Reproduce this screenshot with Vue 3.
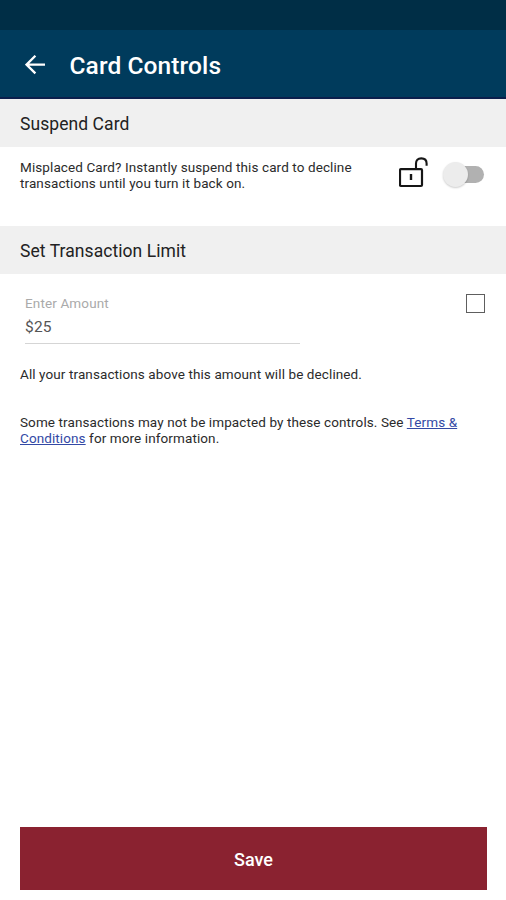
<script setup>
import { ref } from 'vue'

const suspended = ref(false)
const limitEnabled = ref(false)
const amount = ref('$25')
</script>

<template>
  <div class="screen">
    <div class="status-bar"></div>
    <header class="app-bar">
      <button class="back" aria-label="Back">
        <svg width="20" height="20" viewBox="0 0 20 20" fill="none" stroke="#fff" stroke-width="2.3">
          <path d="M20 9.6H2M10.4 0.8L1.5 9.6l8.9 8.8" />
        </svg>
      </button>
      <h1>Card Controls</h1>
    </header>

    <h2 class="section-title">Suspend Card</h2>
    <section class="suspend">
      <p class="copy">Misplaced Card? Instantly suspend this card to decline<br />transactions until you turn it back on.</p>
      <svg class="lock" width="30" height="31" viewBox="0 0 30 31" fill="none" stroke="#161616">
        <rect x="1" y="12.2" width="22" height="16.8" rx="1" stroke-width="2.2" />
        <path d="M17 12V6.5Q17 1.4 22.3 1.4T27.6 6.5V8.8" stroke-width="2.1" />
        <path d="M12 17v6" stroke-width="2.4" />
      </svg>
      <button class="switch" :class="{ on: suspended }" role="switch" :aria-checked="suspended" @click="suspended = !suspended">
        <span class="track"></span>
        <span class="thumb"></span>
      </button>
    </section>

    <h2 class="section-title">Set Transaction Limit</h2>
    <section class="limit">
      <label class="field">
        <span class="label">Enter Amount</span>
        <input v-model="amount" type="text" />
      </label>
      <button class="checkbox" :class="{ checked: limitEnabled }" role="checkbox" :aria-checked="limitEnabled" @click="limitEnabled = !limitEnabled"></button>
    </section>
    <p class="copy note">All your transactions above this amount will be declined.</p>
    <p class="copy terms">Some transactions may not be impacted by these controls. See <a href="#">Terms &amp;<br />Conditions</a> for more information.</p>

    <button class="save">Save</button>
  </div>
</template>

<style>
body {
  margin: 0;
  background: #fff;
}
</style>

<style scoped>
.screen {
  box-sizing: border-box;
  display: flex;
  flex-direction: column;
  height: 900px;
  padding-bottom: 10px;
  background: #fff;
  color: #222;
  font-family: Roboto, "Liberation Sans", sans-serif;
}
button {
  padding: 0;
  border: 0;
  background: none;
  font-family: inherit;
}
h1, h2, p {
  margin: 0;
}
.status-bar {
  height: 30px;
  flex: none;
  background: #002e46;
}
.app-bar {
  box-sizing: border-box;
  display: flex;
  align-items: center;
  gap: 24.5px;
  height: 69px;
  flex: none;
  padding: 2px 25px 0;
  background: #003b5c;
  border-bottom: 2px solid #0b1f4c;
}
.back {
  display: flex;
}
h1 {
  padding-top: 2px;
  color: #fff;
  font-size: 24.5px;
  font-weight: 500;
  line-height: 30px;
  letter-spacing: 0.1px;
}
.section-title {
  height: 48px;
  flex: none;
  padding-left: 20px;
  background: #f0f0f0;
  color: #222;
  font-size: 17.5px;
  font-weight: 400;
  line-height: 50px;
  letter-spacing: 0.07px;
}
.suspend {
  box-sizing: border-box;
  display: flex;
  align-items: flex-start;
  height: 79px;
  flex: none;
  padding: 9px 21px 0 20px;
}
.copy {
  color: #2b2b2b;
  font-size: 13.5px;
  line-height: 16px;
  letter-spacing: 0.1px;
  white-space: nowrap;
}
.suspend .copy {
  flex: 1;
  padding-top: 3px;
}
.lock {
  flex: none;
  margin: 1px 14px 0 0;
}
.switch {
  display: grid;
  align-items: center;
  width: 42px;
  height: 36px;
  flex: none;
}
.track, .thumb {
  grid-area: 1 / 1;
}
.track {
  width: 34px;
  height: 17px;
  margin-left: 7px;
  border-radius: 9px;
  background: #b1b1b1;
}
.thumb {
  width: 25px;
  height: 25px;
  border-radius: 50%;
  background: #ececec;
  box-shadow: 0 1px 2px rgba(0, 0, 0, 0.2);
}
.switch.on .thumb {
  justify-self: end;
}
.limit {
  box-sizing: border-box;
  display: flex;
  justify-content: space-between;
  align-items: flex-start;
  height: 92px;
  flex: none;
  padding: 20px 21px 0 25px;
}
.field {
  display: flex;
  flex-direction: column;
  width: 275px;
  border-bottom: 1px solid #d5d5d5;
}
.label {
  color: #aaa;
  font-size: 13.5px;
  line-height: 18px;
  letter-spacing: 0.13px;
}
input {
  height: 31px;
  box-sizing: border-box;
  padding: 1px 0 2px;
  border: 0;
  outline: 0;
  background: none;
  color: #555;
  font: 15.5px/24px Roboto, "Liberation Sans", sans-serif;
  letter-spacing: 0.2px;
}
.checkbox {
  box-sizing: border-box;
  width: 19px;
  height: 19px;
  border: 1.5px solid #5e5e5e;
}
.checkbox.checked {
  background: #003b5c;
}
.note {
  padding-left: 20px;
}
.terms {
  padding: 32px 0 0 20px;
}
a {
  color: #3349a5;
}
.save {
  height: 63px;
  margin: auto 19px 0 20px;
  padding-top: 2px;
  background: #8a2230;
  color: #fff;
  font-size: 18px;
  font-weight: 500;
}
</style>
